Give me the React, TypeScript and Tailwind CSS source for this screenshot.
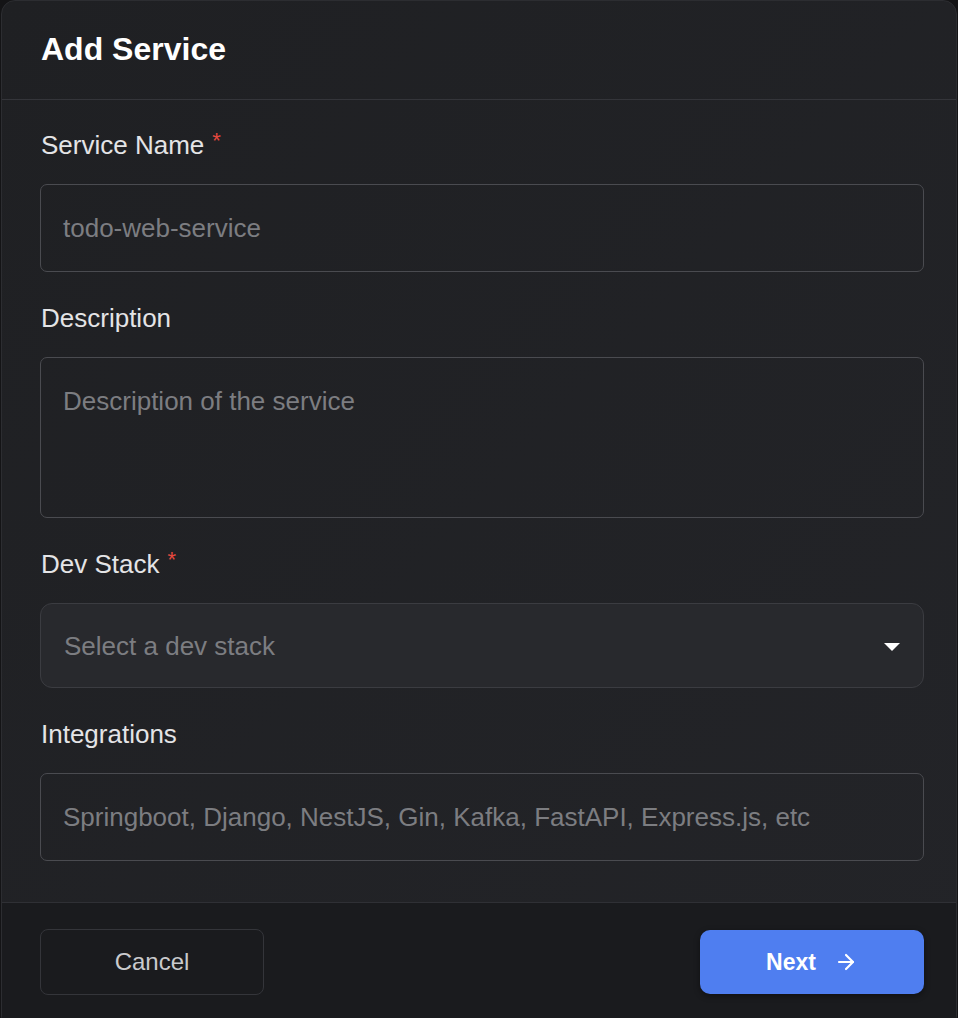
import React from "react";
import { ArrowRight } from "lucide-react";

const font = { fontFamily: '"Liberation Sans", Arial, sans-serif' };

function Label({ text, required }: { text: string; required?: boolean }) {
  return (
    <div className="h-[32px] flex items-center pl-[1px] text-[26px] leading-[32px] text-[#e4e4e6] mb-[23px]">
      <span>{text}</span>
      {required && <span className="text-[#e5483e] ml-[8px] text-[22px] -mt-[8px]">*</span>}
    </div>
  );
}

export default function App() {
  return (
    <div className="min-h-[1018px] w-full bg-[#141416] overflow-hidden" style={font}>
      <div className="ml-[1px] w-[956px] h-[1030px] rounded-[14px] border border-[#2c2d31] bg-gradient-to-br from-[#1f2023] to-[#232428] flex flex-col overflow-hidden">
        <div className="h-[99px] shrink-0 border-b border-[#34353a] flex items-center px-[39px]">
          <h1 className="text-[32px] font-bold text-white leading-none -mt-[2px]">Add Service</h1>
        </div>
        <div className="pl-[38px] pr-[32px] pt-[29px] pb-[41px] flex flex-col">
          <Label text="Service Name" required />
          <div className="h-[88px] rounded-[7px] border border-[#4a4b50] flex items-center px-[22px] text-[26px] text-[#7c7d81]">
            todo-web-service
          </div>
          <div className="h-[30px]" />
          <Label text="Description" />
          <div className="h-[161px] rounded-[7px] border border-[#4a4b50] px-[22px] pt-[27px] text-[26px] text-[#7c7d81] leading-[32px]">
            Description of the service
          </div>
          <div className="h-[30px]" />
          <Label text="Dev Stack" required />
          <div className="h-[85px] rounded-[12px] border border-[#3b3c41] bg-[#28292d] flex items-center justify-between pl-[23px] pr-[22px] text-[26px] text-[#7c7d81]">
            <span className="mt-[1px]">Select a dev stack</span>
            <svg width="18" height="10" viewBox="0 0 18 10" className="mt-[2px]">
              <path d="M1 1 L17 1 L9 9 Z" fill="#ffffff" />
            </svg>
          </div>
          <div className="h-[30px]" />
          <Label text="Integrations" />
          <div className="h-[88px] rounded-[7px] border border-[#4a4b50] flex items-center px-[22px] text-[26px] text-[#7c7d81]">
            Springboot, Django, NestJS, Gin, Kafka, FastAPI, Express.js, etc
          </div>
        </div>
        <div className="flex-1 border-t border-[#2f3035] bg-[#1a1b1e] pl-[38px] pr-[32px] pt-[26px] flex justify-between items-start">
          <button className="w-[224px] h-[66px] rounded-[8px] border border-[#34353a] text-[24px] text-[#c9cacd] flex items-center justify-center">
            Cancel
          </button>
          <button className="w-[224px] h-[64px] mt-[1px] rounded-[10px] bg-[#4f7ef0] text-white text-[23px] font-bold flex items-center justify-center gap-[18px] shadow-[0_2px_6px_rgba(0,0,0,0.4)]">
            <span>Next</span>
            <ArrowRight size={24} strokeWidth={2.2} />
          </button>
        </div>
      </div>
    </div>
  );
}
